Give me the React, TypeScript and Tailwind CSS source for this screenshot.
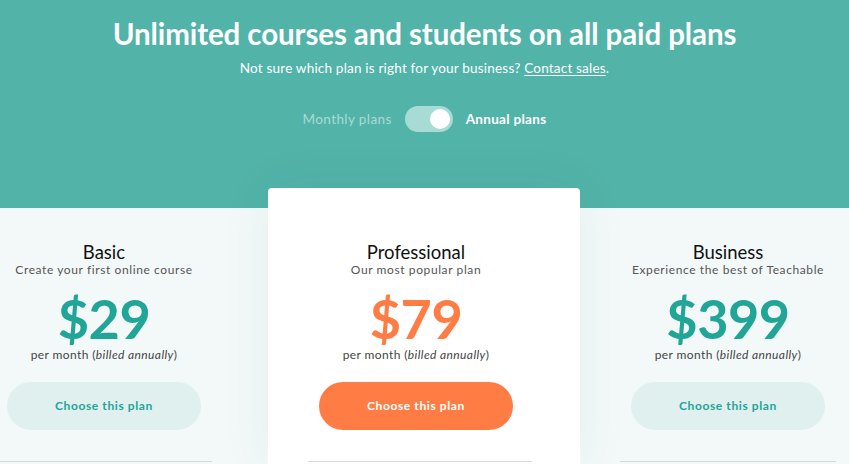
import React from "react";

interface Plan {
  name: string;
  tagline: string;
  price: string;
  featured?: boolean;
}

const plans: Plan[] = [
  { name: "Basic", tagline: "Create your first online course", price: "$29" },
  { name: "Professional", tagline: "Our most popular plan", price: "$79", featured: true },
  { name: "Business", tagline: "Experience the best of Teachable", price: "$399" },
];

function PlanBody({ plan }: { plan: Plan }) {
  return (
    <div className="flex flex-col items-center">
      <h3 className="text-[18.5px] leading-[22px] text-[#111]">{plan.name}</h3>
      <p className="text-[12px] leading-[14px] tracking-[0.6px] text-[#555]">{plan.tagline}</p>
      <div
        className={`mt-[17px] text-[54px] leading-[50px] font-bold tracking-[-0.5px] ${
          plan.featured ? "text-[#ff7d44]" : "text-[#21a596]"
        }`}
      >
        {plan.price}
      </div>
      <p className="mt-[4px] text-[12px] leading-[14px] tracking-[0.4px] text-[#444]">
        per month (<span className="italic">billed annually</span>)
      </p>
      <button
        className={`mt-[20px] h-[48px] w-[194px] rounded-full text-[12px] font-bold tracking-[0.6px] ${
          plan.featured ? "bg-[#ff7d44] text-white" : "bg-[#dff0ef] text-[#21a596]"
        }`}
      >
        Choose this plan
      </button>
    </div>
  );
}

export default function App() {
  return (
    <div
      className="relative h-[464px] w-[849px] overflow-hidden bg-[#f3f9f9]"
      style={{ fontFamily: "Lato, 'Noto Sans', sans-serif" }}
    >
      <div className="bg-[#52b3a9] h-[208px] pt-[16px] flex flex-col items-center text-white">
        <h1 className="text-[29.5px] leading-[36px] font-bold tracking-[-0.1px]">
          Unlimited courses and students on all paid plans
        </h1>
        <p className="mt-[8px] text-[13.5px] leading-[16px] tracking-[0.2px]">
          Not sure which plan is right for your business?{" "}
          <a className="underline underline-offset-2">Contact sales</a>.
        </p>
        <div className="mt-[30px] flex items-center gap-[13px] text-[13.5px]">
          <span className="text-[#a9dbd5] tracking-[0.4px]">Monthly plans</span>
          <div className="flex h-[26px] w-[48px] items-center justify-end rounded-full bg-[#a9dbd5] px-[3px]">
            <div className="h-[20px] w-[20px] rounded-full bg-white" />
          </div>
          <span className="font-bold tracking-[0.3px]">Annual plans</span>
        </div>
      </div>

      <div className="flex items-start">
        <div className="ml-[-60px] w-[328px] shrink-0 pt-[33px] flex flex-col">
          <PlanBody plan={plans[0]} />
          <div className="mt-[31px] ml-[60px] w-[212px] border-t border-[#cfdcdc]" />
        </div>

        <div className="relative z-10 mt-[-20px] flex h-[280px] w-[312px] shrink-0 flex-col items-center rounded-t-[4px] bg-white pt-[53px] pr-[16px] shadow-[0_0_50px_rgba(40,80,80,0.07)]">
          <PlanBody plan={plans[1]} />
          <div className="mt-[31px] ml-[8px] w-[224px] border-t border-[#d6dcdc]" />
        </div>

        <div className="w-[296px] shrink-0 pt-[33px] flex flex-col items-center">
          <PlanBody plan={plans[2]} />
          <div className="mt-[31px] w-[216px] border-t border-[#cfdcdc]" />
        </div>
      </div>
    </div>
  );
}
